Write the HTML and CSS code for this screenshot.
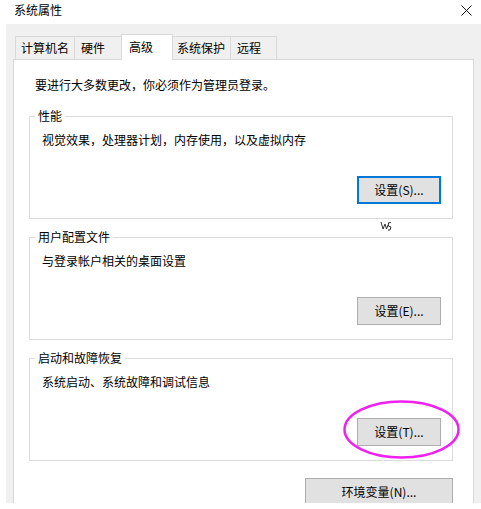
FILE: index.html
```html
<!DOCTYPE html>
<html lang="zh-CN">
<head>
<meta charset="utf-8">
<title>系统属性</title>
<link rel="stylesheet" href="styles.css">
</head>
<body>
<div class="window">
  <div class="titlebar">
    <span class="title">系统属性</span>
    <svg class="close" width="11" height="11" viewBox="0 0 11 11"><path d="M0.5 0.5 L10.5 10.5 M10.5 0.5 L0.5 10.5" stroke="#111" stroke-width="1" fill="none"/></svg>
  </div>
  <div class="client">
    <div class="tabs">
      <div class="tab t1">计算机名</div>
      <div class="tab t2">硬件</div>
      <div class="tab t3 active">高级</div>
      <div class="tab t4">系统保护</div>
      <div class="tab t5">远程</div>
    </div>
    <div class="panel">
      <div class="notice">要进行大多数更改，你必须作为管理员登录。</div>
      <div class="group first">
        <div class="group-title">性能</div>
        <div class="desc">视觉效果，处理器计划，内存使用，以及虚拟内存</div>
        <button class="btn focus">设置(S)...</button>
      </div>
      <div class="group">
        <div class="group-title">用户配置文件</div>
        <div class="desc">与登录帐户相关的桌面设置</div>
        <button class="btn">设置(E)...</button>
      </div>
      <div class="group">
        <div class="group-title">启动和故障恢复</div>
        <div class="desc">系统启动、系统故障和调试信息</div>
        <button class="btn">设置(T)...</button>
      </div>
      <button class="btn env">环境变量(N)...</button>
    </div>
  </div>
  <svg class="cursor" width="13" height="11" viewBox="0 0 13 11"><path d="M1 1 L3 8 L5 3 L6.5 8 L8 4 M8 2 L11 1.5 M8.5 2 L8.3 5 L11 6 L10 9 L8 9" stroke="#333" stroke-width="1" fill="none"/></svg>
  <svg class="ring" width="119" height="61" viewBox="0 0 119 61"><ellipse cx="59.5" cy="30.5" rx="57" ry="28" fill="none" stroke="#f020f0" stroke-width="2.5"/></svg>
</div>
</body>
</html>
```
FILE: styles.css
```css
* { box-sizing: border-box; }
html, body { margin: 0; padding: 0; background: #fff; }
body {
  font-family: "Noto Sans CJK SC", "Microsoft YaHei", sans-serif;
  font-size: 12px;
  line-height: 16px;
  color: #000;
}
.window {
  position: relative;
  width: 481px;
  height: 509px;
  background: #fff;
  overflow: hidden;
}
.titlebar {
  height: 24px;
  display: flex;
  align-items: center;
  justify-content: space-between;
  padding: 0 9px 4px 14px;
}
.close { display: block; margin-top: 1px; }
.client {
  margin-left: 6px;
  height: 479px;
  background: #f0f0f0;
  padding: 10px 7px 0 7px;
  overflow: hidden;
}
.tabs {
  display: flex;
  align-items: flex-end;
  height: 25px;
  margin-left: 2px;
}
.tab {
  height: 23px;
  border: 1px solid #d9d9d9;
  border-bottom: 0;
  background: #f0f0f0;
  display: flex;
  align-items: center;
  padding-left: 5px;
  white-space: nowrap;
}
.tab + .tab { margin-left: -1px; }
.t1 { width: 60px; }
.t2 { width: 48px; padding-left: 6px; }
.t3 { width: 52px; padding-left: 7px; }
.t4 { width: 59px; padding-left: 4px; }
.t5 { width: 47px; padding-left: 6px; }
.tab.active {
  height: 26px;
  margin-bottom: -1px;
  background: #fff;
  position: relative;
  z-index: 1;
  padding-bottom: 1px;
}
.panel {
  background: #fff;
  border: 1px solid #d9d9d9;
  height: 460px;
  padding: 17px 20px 0 15px;
  display: flex;
  flex-direction: column;
}
.notice { padding-left: 6px; }
.group {
  border: 1px solid #dcdcdc;
  margin-top: 18px;
  padding: 0 11px 14px 12px;
  display: flex;
  flex-direction: column;
}
.group.first { margin-top: 23px; }
.group-title {
  align-self: flex-start;
  margin: -9px 0 0 -7px;
  padding: 0 3px;
  background: #fff;
}
.desc { margin-top: 8px; }
.btn {
  align-self: flex-end;
  margin-top: 28px;
  width: 84px;
  height: 28px;
  border: 1px solid #adadad;
  background: #e1e1e1;
  font: inherit;
  color: #000;
  padding: 0;
  display: flex;
  align-items: center;
  justify-content: center;
}
.btn.focus { border: 2px solid #0078d7; }
.btn.env {
  width: 148px;
  margin-top: 17px;
}
.cursor { position: absolute; left: 380px; top: 221px; }
.ring { position: absolute; left: 342px; top: 399px; }
```
